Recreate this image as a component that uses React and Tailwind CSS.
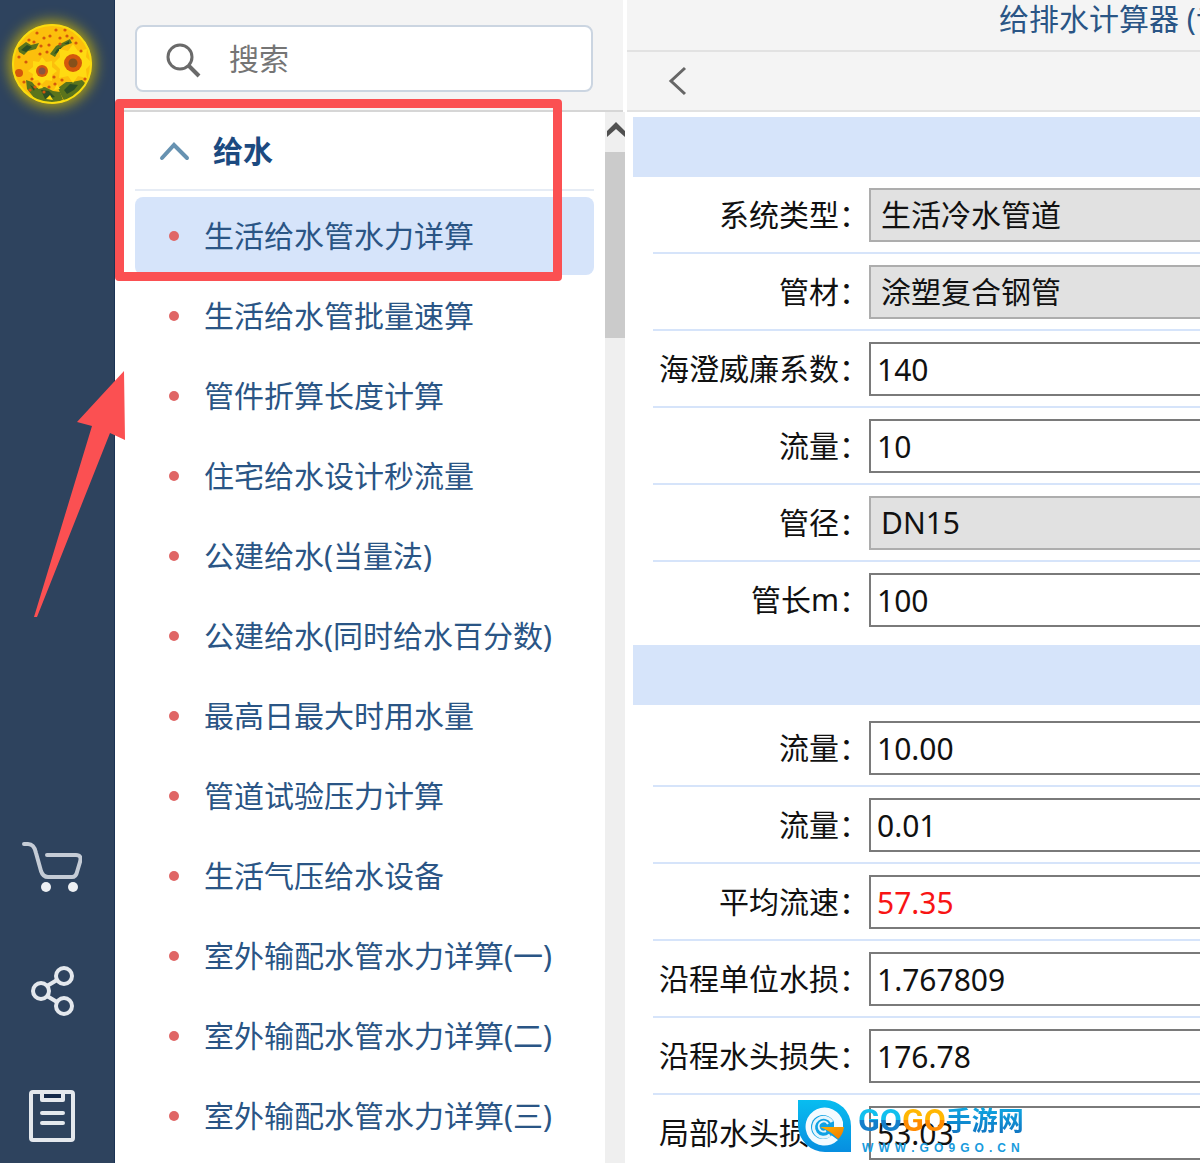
import React from "react";

const menuItems = [
  "生活给水管水力详算",
  "生活给水管批量速算",
  "管件折算长度计算",
  "住宅给水设计秒流量",
  "公建给水(当量法)",
  "公建给水(同时给水百分数)",
  "最高日最大时用水量",
  "管道试验压力计算",
  "生活气压给水设备",
  "室外输配水管水力详算(一)",
  "室外输配水管水力详算(二)",
  "室外输配水管水力详算(三)",
];

const inputFields = [
  { id: "system", label: "系统类型", value: "生活冷水管道", type: "select" },
  { id: "material", label: "管材", value: "涂塑复合钢管", type: "select" },
  { id: "hazen", label: "海澄威廉系数", value: "140" },
  { id: "flow", label: "流量", value: "10" },
  { id: "diameter", label: "管径", value: "DN15", type: "select" },
  { id: "length", label: "管长m", value: "100" },
];

const resultFields = [
  { id: "flow-h", label: "流量", value: "10.00" },
  { id: "flow-s", label: "流量", value: "0.01" },
  { id: "velocity", label: "平均流速", value: "57.35", alert: true },
  { id: "unit-loss", label: "沿程单位水损", value: "1.767809" },
  { id: "head-loss", label: "沿程水头损失", value: "176.78" },
  { id: "local-loss", label: "局部水头损失", value: "53.03" },
];

const seeds = [
  [17, 16], [28, 30], [37, 21], [44, 6], [32, 14], [55, 12], [64, 19], [7, 33],
  [23, 63], [73, 55], [48, 14], [25, 9], [35, 28], [22, 18], [38, 12], [53, 6],
  [12, 58], [32, 68], [27, 60], [42, 53], [43, 60], [37, 63], [20, 55], [14, 38],
  [48, 20], [29, 22], [69, 27], [50, 56], [18, 66], [60, 14],
];

function Avatar() {
  return (
    <button
      aria-label="头像"
      className="h-20 w-20 shrink-0 rounded-full shadow-[0_0_14px_3px_#b5a510]"
    >
      <svg viewBox="0 0 80 80" className="h-20 w-20">
        <defs>
          <clipPath id="round">
            <circle cx="40" cy="40" r="40" />
          </clipPath>
        </defs>
        <g clipPath="url(#round)">
          <rect width="80" height="80" fill="#fcbf0c" />
          <g fill="#5b741c">
            <path d="M6 24l8-6 5 3 8-2-3 6-8 2-4 4-5-3z" />
            <path d="M38 30l6-8 6-3 8-4 2 4-8 3-5 4-4 7z" />
            <path d="M14 56l6 2 5 6 8-1 8 4 7 1 3 8-12 4-16-5-8-10z" />
            <path d="M46 64l8-6 6 0 10-2 4 4-8 12-12 8-5-9z" />
          </g>
          <g fill="#2c4f24">
            <path d="M9 26l6-5 5 2-6 5zM29 66l8 1 6 6-10 2zM52 66l6-6 8 1-4 5-7 4zM42 30l3-5 5-2-5 6zM18 61l5 3-1 3zM52 20l5-3 0 3z" />
          </g>
          <g fill="#ffda12">
            <path d="M61 20l5 7 9-2-1 8 6 6-6 6 1 9-9-2-5 7-5-7-9 2 1-9-6-6 6-6-1-8 9 2z" />
            <path d="M30 33l4 5 6-1v6l5 4-5 4v6l-6-1-4 4-4-4-6 1 1-7-5-3 5-4v-6l6 1z" />
            <path d="M28 59l3 5-5 1zM42 66l3-6 3 5zM34 75l4-4 3 5z" />
          </g>
          <g fill="#d4580c">
            <circle cx="61" cy="39" r="9" />
            <circle cx="30" cy="47" r="6" />
            <circle cx="7" cy="49" r="4" />
            {seeds.map(([x, y]) => (
              <circle key={`${x}-${y}`} cx={x} cy={y} r="1.600" />
            ))}
          </g>
          <circle cx="61" cy="39" r="4.500" fill="#85501a" />
          <circle cx="30" cy="47" r="3.500" fill="#8a5540" />
        </g>
        <circle cx="40" cy="40" r="39" fill="none" stroke="#f8dc10" strokeWidth="2" />
      </svg>
    </button>
  );
}

function Sidebar() {
  return (
    <nav className="flex w-[115px] shrink-0 flex-col border-r border-[#1b3354] bg-[#2e435e] pt-6 pl-3">
      <Avatar />
      <div className="mt-auto flex w-20 flex-col items-center">
        <button aria-label="购物车" className="mb-[74px]">
          <svg width="60" height="52" viewBox="0 0 60 52" fill="none" stroke="#c5ccd6" strokeWidth="4" strokeLinecap="round" strokeLinejoin="round">
            <path d="M2 4H6C11 4 13 8 14 13L19 31Q21 37 26 37H50Q54 37 55 32L58 22Q60 15 54 15H25" />
            <circle cx="24" cy="47" r="5" fill="#eef0f3" stroke="none" />
            <circle cx="51" cy="47" r="5" fill="#eef0f3" stroke="none" />
          </svg>
        </button>
        <button aria-label="分享" className="mb-[74px]">
          <svg width="44" height="50" viewBox="0 0 44 50" fill="none" stroke="#e4e8ed" strokeWidth="4">
            <path d="M17 20L27 14M17 30L27 36" />
            <circle cx="11" cy="25" r="8" />
            <circle cx="34" cy="10" r="8" />
            <circle cx="34" cy="40" r="8" />
          </svg>
        </button>
        <button aria-label="记录" className="mb-[21px]">
          <svg width="46" height="52" viewBox="0 0 46 52" fill="none" stroke="#e4e8ed" strokeWidth="4" strokeLinejoin="round">
            <rect x="2" y="2" width="42" height="48" rx="2" />
            <path d="M13 2H34V10H13Z" fill="#14294a" />
            <path d="M13 23H34M13 33H34" strokeLinecap="round" />
          </svg>
        </button>
      </div>
    </nav>
  );
}

function Menu() {
  return (
    <aside className="flex w-[512px] shrink-0 flex-col bg-white">
      <div className="mr-1 h-28 shrink-0 border-b-2 border-[#d6d6d6] bg-[#f4f4f4] pt-[25px] pr-[30px] pl-5">
        <label className="flex h-[67px] items-center rounded-lg border-2 border-[#cbd5e1] bg-white pl-7">
          <svg width="40" height="40" viewBox="0 0 40 40" className="shrink-0" fill="none" stroke="#6a6a6a" strokeWidth="3">
            <circle cx="15" cy="18" r="12" />
            <path d="M23 26L34 37" strokeWidth="4" />
          </svg>
          <input
            type="search"
            aria-label="搜索"
            placeholder="搜索"
            className="ml-6 w-full min-w-0 bg-transparent outline-none placeholder:text-[#757575]"
          />
        </label>
      </div>
      <div className="flex min-h-0 flex-1">
        <div className="min-w-0 flex-1 overflow-hidden pr-[11px] pl-5">
          <button className="flex h-[79px] w-full items-center border-b-2 border-[#e6ecf5] pl-6 font-bold text-[#1c4a80]">
            <svg width="32" height="20" viewBox="0 0 32 20" fill="none" stroke="#6792b1" strokeWidth="4" strokeLinecap="round">
              <path d="M3 17L15 4L28 17" />
            </svg>
            <span className="ml-[22px]">给水</span>
          </button>
          <ul className="pt-[5px]">
            {menuItems.map((item, i) => (
              <li key={item} className="h-20 py-px">
                <a
                  href="#"
                  className={
                    i === 0
                      ? "flex h-full items-center rounded-lg bg-[#d6e4fa] pl-[34px] whitespace-nowrap text-[#2a5585]"
                      : "flex h-full items-center pl-[34px] whitespace-nowrap text-[#2a5585]"
                  }
                >
                  <span className="mr-[25px] h-2.5 w-2.5 rounded-full bg-[#e06666]" />
                  {item}
                </a>
              </li>
            ))}
          </ul>
        </div>
        <div className="mr-0.5 w-5 shrink-0 bg-[#efefef]">
          <div className="flex h-10 items-start justify-center pt-2">
            <svg width="20" height="18" viewBox="0 0 20 18" fill="#505050">
              <path d="M11 2L20 11V17L11 9L2 17V11Z" />
            </svg>
          </div>
          <div className="h-[186px] bg-[#cbcbcb]" />
        </div>
      </div>
    </aside>
  );
}

function Field({ field }) {
  return (
    <div className="ml-5 flex h-[77px] items-center border-b-2 border-[#d6e4fa] pt-px last:border-transparent">
      <label htmlFor={field.id} className="w-[216px] shrink-0 text-right whitespace-nowrap">
        {field.label}：
      </label>
      {field.type === "select" ? (
        <select
          id={field.id}
          className="h-[54px] min-w-0 flex-1 appearance-none border-2 border-r-0 border-[#adadad] bg-[#e1e1e1] pl-2.5"
        >
          <option>{field.value}</option>
        </select>
      ) : (
        <input
          id={field.id}
          defaultValue={field.value}
          className={
            field.alert
              ? "h-[54px] min-w-0 flex-1 border-2 border-r-0 border-[#7a7a7a] bg-white pl-1.5 text-[#f81414]"
              : "h-[54px] min-w-0 flex-1 border-2 border-r-0 border-[#7a7a7a] bg-white pl-1.5"
          }
        />
      )}
    </div>
  );
}

function Calculator() {
  return (
    <main className="flex min-w-0 flex-1 flex-col bg-white">
      <header className="shrink-0 bg-[#f4f4f4]">
        <h1 className="h-[52px] overflow-hidden border-b-2 border-[#e2e2e2] pl-[372px] leading-[38px] whitespace-nowrap text-[#2a5585]">
          给排水计算器 (专
        </h1>
        <div className="flex h-[60px] items-center border-b-2 border-[#e2e2e2] pl-10">
          <button aria-label="返回">
            <svg width="20" height="30" viewBox="0 0 20 30" fill="none" stroke="#666666" strokeWidth="3">
              <path d="M18 2L4 15L18 28" />
            </svg>
          </button>
        </div>
      </header>
      <div className="min-h-0 flex-1 overflow-hidden pt-[5px] pl-1.5 text-[#111111]">
        <section>
          <div className="h-[60px] bg-[#d6e4fa]" />
          <div>
            {inputFields.map((f) => (
              <Field key={f.id} field={f} />
            ))}
          </div>
        </section>
        <section className="mt-1.5">
          <div className="h-[60px] bg-[#d6e4fa]" />
          <div className="pt-[5px]">
            {resultFields.map((f) => (
              <Field key={f.id} field={f} />
            ))}
          </div>
        </section>
      </div>
    </main>
  );
}

function Watermark() {
  return (
    <div className="absolute top-[1100px] left-[798px] flex">
      <svg width="54" height="52" viewBox="0 0 54 52">
        <defs>
          <linearGradient id="leaf" x1="0" y1="0" x2="0" y2="1">
            <stop offset="0" stopColor="#08bdf0" />
            <stop offset="1" stopColor="#078ee0" />
          </linearGradient>
          <linearGradient id="wedge" x1="0" y1="0" x2="1" y2="1">
            <stop offset="0" stopColor="#ffb000" />
            <stop offset="1" stopColor="#ee7800" />
          </linearGradient>
        </defs>
        <path d="M0 0H27A26 26 0 0 1 53 26V52H27A27 27 0 0 1 0 26Z" fill="url(#leaf)" />
        <path d="M45 22A19 19 0 1 0 40 40L22 27L45 22Z" fill="#f4fbff" />
        <circle cx="25" cy="27" r="12" fill="#10a2e4" />
        <path d="M34 22A10 10 0 1 0 32 35" fill="none" stroke="#e6f6fc" strokeWidth="3" />
        <path d="M30 24A5 5 0 1 0 28 31" fill="none" stroke="#e6f6fc" strokeWidth="2" />
        <path d="M36 22H45V27H36Z" fill="#f4fbff" />
        <path d="M22 27H46Q45 35 40 39Q33 31 22 27Z" fill="url(#wedge)" />
      </svg>
      <div className="ml-1.5">
        <div className="flex h-10 items-center font-bold">
          <span className="bg-linear-to-b from-[#10c0ee] from-50% to-[#147fcb] to-50% bg-clip-text font-[Roboto,sans-serif] text-[32px] text-transparent">GO</span>
          <span className="bg-linear-to-b from-[#ffb703] from-50% to-[#ff8a00] to-50% bg-clip-text font-[Roboto,sans-serif] text-[32px] text-transparent">GO</span>
          <span className="bg-linear-to-b from-[#10b5ea] to-[#1269ba] bg-clip-text text-[26px] whitespace-nowrap text-transparent">手游网</span>
        </div>
        <div className="flex justify-between pr-1 pl-1 font-['Liberation_Sans',sans-serif] text-xs leading-4 font-bold text-[#189bdd]">
          {"WWW.GO9GO.CN".split("").map((c, i) => (
            <span key={i}>{c}</span>
          ))}
        </div>
      </div>
    </div>
  );
}

export default function App() {
  return (
    <div className="relative flex h-screen overflow-hidden bg-white font-['Noto_Sans','Noto_Sans_CJK_SC',sans-serif] text-[30px] leading-10">
      <Sidebar />
      <Menu />
      <Calculator />
      <div className="pointer-events-none absolute top-[99px] left-[115px] h-[182px] w-[447px] rounded border-[9px] border-[#fb5052]" />
      <svg className="pointer-events-none absolute top-[370px] left-8" width="96" height="250" viewBox="0 0 96 250">
        <path d="M92 1L93 70L78 63L5 247H2L60 56L45 52Z" fill="#fb5052" />
      </svg>
      <Watermark />
    </div>
  );
}
